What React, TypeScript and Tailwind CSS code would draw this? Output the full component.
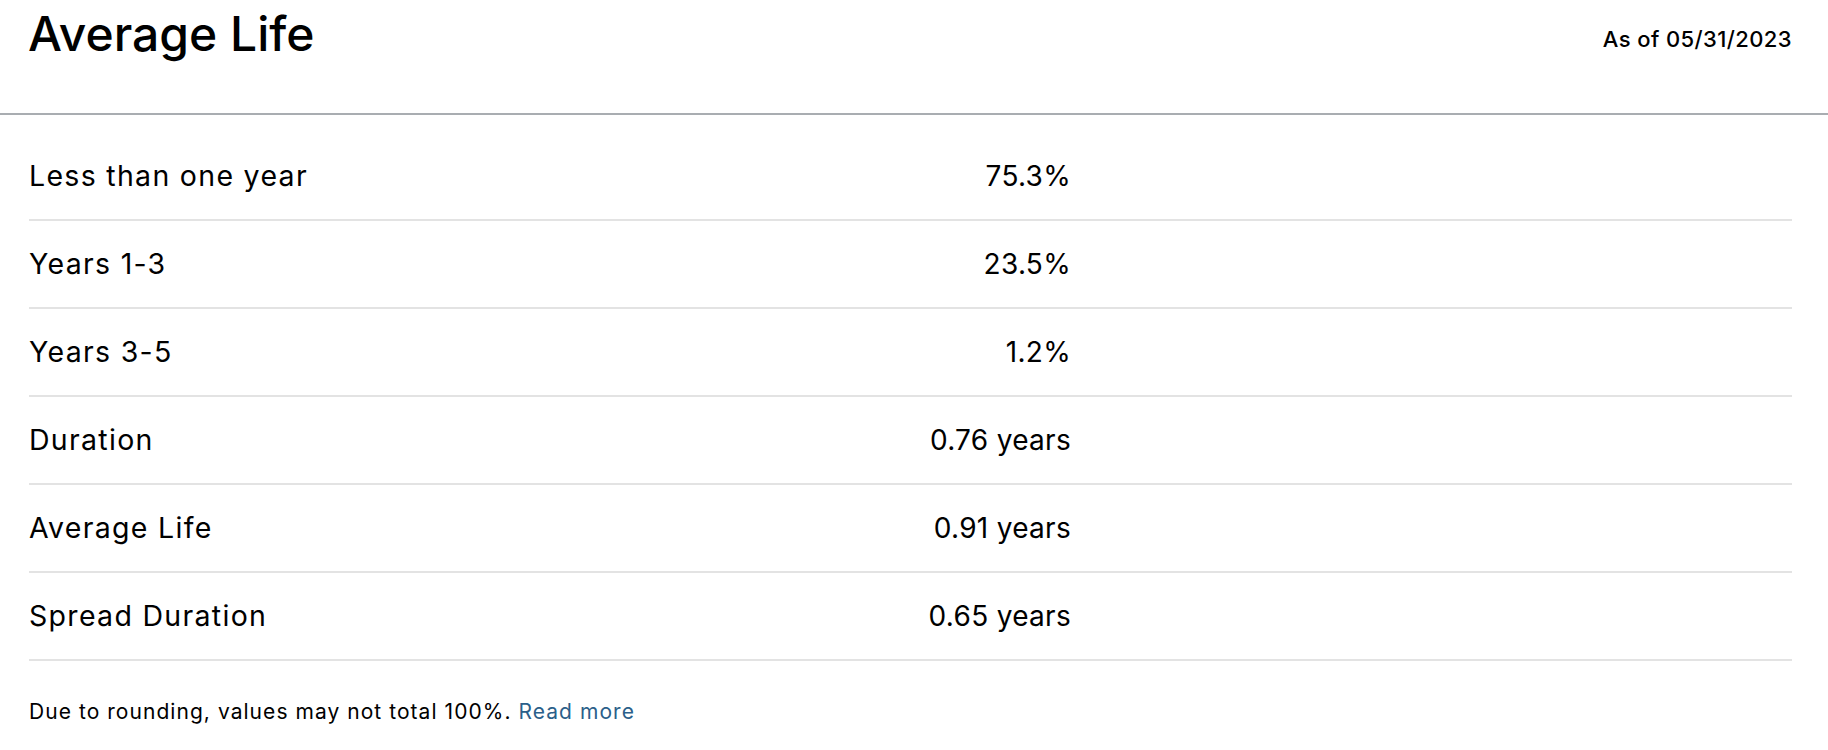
const rows = [
  { label: 'Less than one year', value: '75.3%' },
  { label: 'Years 1-3', value: '23.5%' },
  { label: 'Years 3-5', value: '1.2%' },
  { label: 'Duration', value: '0.76 years' },
  { label: 'Average Life', value: '0.91 years' },
  { label: 'Spread Duration', value: '0.65 years' },
];

const App = () => {
  return (
    <div className="w-[1828px] h-[750px] bg-white text-black font-['Inter',sans-serif] overflow-hidden">
      <div className="flex justify-between items-start h-[115px] border-b-2 border-[#a9adb1] pl-[28px] pr-[36px]">
        <h1 className="pt-[10px] text-[48px] leading-none font-medium">
          Average Life
        </h1>
        <div className="pt-[28px] text-[22px] leading-none font-medium tracking-[0.4px]">
          As of 05/31/2023
        </div>
      </div>
      <div className="mt-[18px] ml-[29px] mr-[36px]">
        {rows.map((row, index) => {
          return (
            <div
              key={index}
              className="flex items-center h-[88px] border-b-2 border-[#e3e3e3] text-[28px] leading-none"
            >
              <div className="w-[740px] text-[28.5px] tracking-[1.3px]">
                {row.label}
              </div>
              <div className="w-[302px] text-right tracking-[0.3px]">
                {row.value}
              </div>
            </div>
          );
        })}
        <p className="mt-[40px] text-[21px] leading-none tracking-[1.05px]">
          Due to rounding, values may not total 100%.{' '}
          <a href="#" className="text-[#2b5f8a]">
            Read more
          </a>
        </p>
      </div>
    </div>
  );
};

export default App;
